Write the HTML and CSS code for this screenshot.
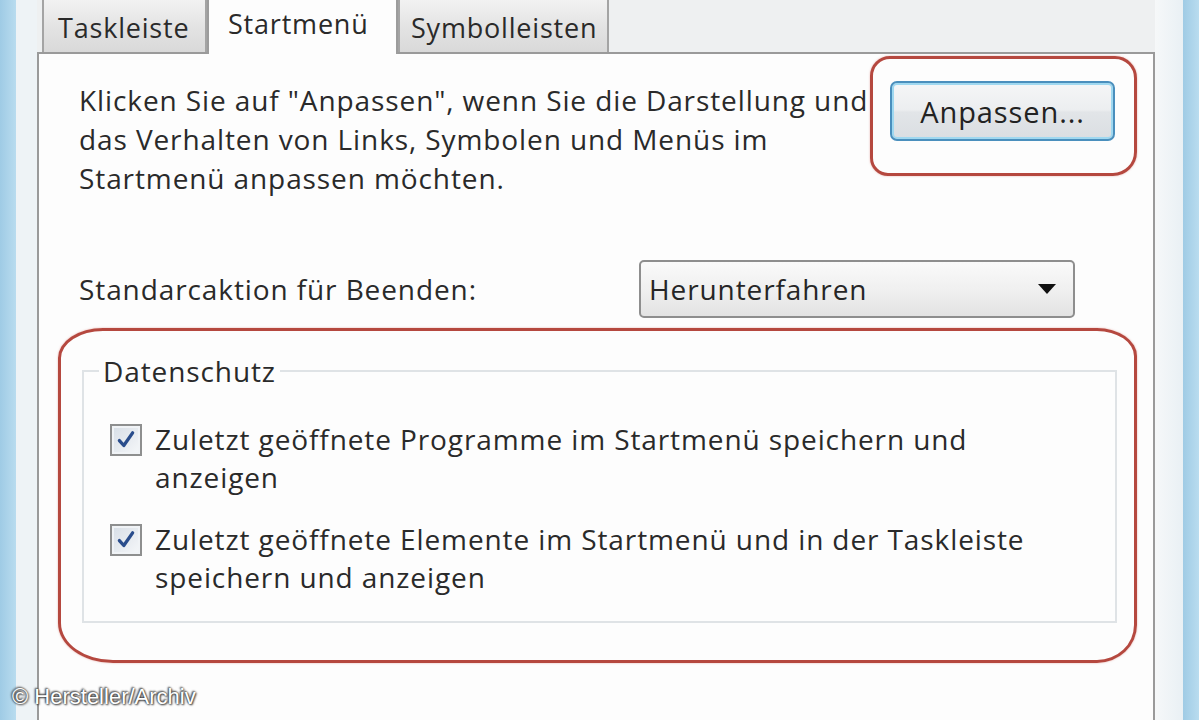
FILE: index.html
```html
<!DOCTYPE html>
<html lang="de">
<head>
    <meta charset="UTF-8">
    <title>Eigenschaften von Taskleiste und Startmenü</title>
    <link rel="stylesheet" href="styles.css">
</head>
<body>
    <div class="screen">
        <div class="edge"></div>
        <div class="frame frame-left"></div>
        <div class="dialog">
            <div class="tabs">
                <div class="tab">Taskleiste</div>
                <div class="tab active">Startmenü</div>
                <div class="tab">Symbolleisten</div>
            </div>
            <div class="panel">
                <div class="intro-row">
                    <p class="intro">Klicken Sie auf "Anpassen", wenn Sie die Darstellung und<br>das Verhalten von Links, Symbolen und Menüs im<br>Startmenü anpassen möchten.</p>
                    <div class="mark mark-button">
                        <button class="btn">Anpassen...</button>
                    </div>
                </div>
                <div class="action-row">
                    <span class="label">Standarcaktion für Beenden:</span>
                    <div class="select">
                        <span>Herunterfahren</span>
                        <span class="arrow"></span>
                    </div>
                </div>
                <div class="mark mark-group">
                    <fieldset class="group">
                        <legend>Datenschutz</legend>
                        <div class="check-row">
                            <span class="checkbox">
                                <svg viewBox="0 0 20 20" width="22" height="22"><path d="M4 10.5 L8 15 L16 3.5" fill="none" stroke="#2a4d8c" stroke-width="3" stroke-linecap="round" stroke-linejoin="round"/></svg>
                            </span>
                            <span class="check-text">Zuletzt geöffnete Programme im Startmenü speichern und<br>anzeigen</span>
                        </div>
                        <div class="check-row">
                            <span class="checkbox">
                                <svg viewBox="0 0 20 20" width="22" height="22"><path d="M4 10.5 L8 15 L16 3.5" fill="none" stroke="#2a4d8c" stroke-width="3" stroke-linecap="round" stroke-linejoin="round"/></svg>
                            </span>
                            <span class="check-text">Zuletzt geöffnete Elemente im Startmenü und in der Taskleiste<br>speichern und anzeigen</span>
                        </div>
                    </fieldset>
                </div>
            </div>
        </div>
        <div class="frame frame-right"></div>
        <div class="edge"></div>
    </div>
    <div class="credit">© Hersteller/Archiv</div>
</body>
</html>
```

FILE: styles.css
```css
html, body {
    margin: 0;
    height: 100%;
    overflow: hidden;
}

body {
    font-family: "Open Sans", "Noto Sans", sans-serif;
    font-size: 28px;
    letter-spacing: 0.9px;
    color: #2a2a2a;
    background: #f0f0f0;
    position: relative;
}

.screen {
    display: flex;
    height: 720px;
}

.edge {
    width: 16px;
    background: linear-gradient(to right, #9fcbe5, #b9dcef);
}

.frame {
    background: #eef3f6;
}

.frame-left {
    width: 21px;
}

.frame-right {
    width: 28px;
    background: linear-gradient(to right, #f6f8f9, #e9f0f4);
}

.dialog {
    flex: 1;
    display: flex;
    flex-direction: column;
    background: #eef0f1;
}

.tabs {
    display: flex;
    height: 52px;
    padding-left: 5px;
    align-items: flex-end;
}

.tab {
    height: 56px;
    box-sizing: border-box;
    padding: 4px 10px 0 14px;
    display: flex;
    align-items: center;
    font-size: 27px;
    letter-spacing: 0.8px;
    color: #2a2a2a;
    border: 2px solid #a4a4a4;
    border-bottom: none;
    background: linear-gradient(to bottom, #f3f3f3, #e3e3e3 55%, #d9d9d9);
}

.tab:first-child {
    width: 165px;
}

.tab.active {
    width: 191px;
    height: 64px;
    padding-top: 0;
    padding-left: 19px;
    margin-bottom: -2px;
    background: #fdfdfd;
    border-color: #9c9c9c;
    position: relative;
    z-index: 1;
}

.tab:last-child {
    width: 211px;
    padding-left: 11px;
}

.panel {
    flex: 1;
    background: #fdfdfd;
    border: 2px solid #9a9a9a;
    border-bottom: none;
    padding: 0 16px 0 19px;
}

.intro-row {
    display: flex;
    justify-content: space-between;
    align-items: flex-start;
}

.intro {
    margin: 27px 0 0 21px;
    line-height: 39px;
    white-space: nowrap;
}

.mark {
    border: 3px solid #b5483f;
    box-shadow: 0 0 2px rgba(210, 90, 80, 0.5);
}

.mark-button {
    margin-top: 2px;
    border-radius: 20px 22px 24px 18px;
    padding: 22px 19px 32px 17px;
}

.btn {
    width: 225px;
    height: 60px;
    font-family: inherit;
    font-size: 29px;
    letter-spacing: 0.9px;
    color: #222;
    border: 2px solid #4a8fbd;
    border-radius: 7px;
    background: linear-gradient(to bottom, #f5f6f7, #eceef0 48%, #e2e5e8 52%, #dadee2);
    box-shadow: inset 0 0 0 2px #9fd8f0;
}

.action-row {
    display: flex;
    align-items: center;
    margin-top: 62px;
    margin-left: 21px;
}

.label {
    width: 560px;
}

.select {
    width: 436px;
    height: 58px;
    box-sizing: border-box;
    border: 2px solid #8e8e8e;
    border-radius: 5px;
    background: linear-gradient(to bottom, #fafafa, #f0f0f0 50%, #e3e3e3);
    display: flex;
    align-items: center;
    justify-content: space-between;
    padding: 0 17px 0 8px;
    color: #262626;
}

.arrow {
    width: 0;
    height: 0;
    border-left: 9px solid transparent;
    border-right: 9px solid transparent;
    border-top: 10px solid #111;
}

.mark-group {
    margin-top: 10px;
    border-radius: 45px 40px 40px 55px / 30px 28px 38px 40px;
    padding: 21px 17px 37px 21px;
}

.group {
    margin: 0;
    border: 2px solid #dfe3e6;
    padding: 30px 0 25px 26px;
}

.group legend {
    padding: 0 4px;
    margin-left: -11px;
}

.check-row {
    display: flex;
    align-items: flex-start;
    margin-bottom: 24px;
}

.check-row:last-child {
    margin-bottom: 0;
}

.checkbox {
    width: 32px;
    height: 32px;
    box-sizing: border-box;
    border: 2px solid #8e8f8f;
    background: linear-gradient(135deg, #d7dee6, #f5f7f9);
    box-shadow: inset 0 0 0 2px #f0f3f6;
    display: flex;
    align-items: center;
    justify-content: center;
    margin-top: 4px;
    margin-right: 13px;
}

.check-text {
    line-height: 38px;
    white-space: nowrap;
}

.credit {
    position: absolute;
    left: 12px;
    top: 684px;
    font-family: "Liberation Sans", Arial, sans-serif;
    font-size: 22px;
    letter-spacing: 0;
    color: #fff;
    text-shadow: 0 0 2px #333, 1px 1px 2px #444, -1px -1px 2px #444;
}
```
